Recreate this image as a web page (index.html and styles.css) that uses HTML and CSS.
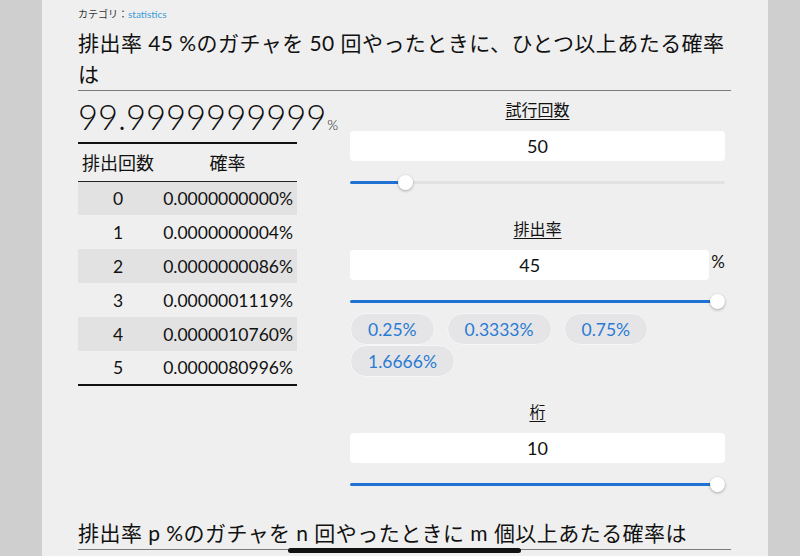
FILE: index.html
```html
<!DOCTYPE html>
<html lang="ja">
<head>
<meta charset="utf-8">
<title>ガチャ確率</title>
<link rel="stylesheet" href="styles.css">
</head>
<body>
<div class="frame">
  <aside class="side side_left"></aside>

  <main class="page">
    <div class="category">カテゴリ：<a href="#">statistics</a></div>
    <h1 class="title">排出率 45 %のガチャを 50 回やったときに、ひとつ以上あたる確率は</h1>

    <div class="calc">
      <section class="result">
        <div class="big_number">99.9999999999<span class="pct">%</span></div>
        <table class="prob_table">
          <thead>
            <tr><th>排出回数</th><th>確率</th></tr>
          </thead>
          <tbody>
            <tr><td>0</td><td>0.0000000000%</td></tr>
            <tr><td>1</td><td>0.0000000004%</td></tr>
            <tr><td>2</td><td>0.0000000086%</td></tr>
            <tr><td>3</td><td>0.0000001119%</td></tr>
            <tr><td>4</td><td>0.0000010760%</td></tr>
            <tr><td>5</td><td>0.0000080996%</td></tr>
          </tbody>
        </table>
      </section>

      <section class="controls">
        <div class="field">
          <label class="field_label">試行回数</label>
          <input class="num" type="text" value="50">
          <input class="slider" type="range" min="1" max="365" value="50" style="--p: 15%">
        </div>

        <div class="field field_rate">
          <label class="field_label">排出率</label>
          <div class="num_row">
            <input class="num" type="text" value="45"><span class="unit">%</span>
          </div>
          <input class="slider" type="range" min="0" max="45" value="45" style="--p: 100%">
          <div class="chips">
            <button class="chip">0.25%</button>
            <button class="chip">0.3333%</button>
            <button class="chip">0.75%</button>
            <button class="chip">1.6666%</button>
          </div>
        </div>

        <div class="field field_last">
          <label class="field_label">桁</label>
          <input class="num" type="text" value="10">
          <input class="slider" type="range" min="0" max="10" value="10" style="--p: 100%">
        </div>
      </section>
    </div>

    <h2 class="title title_sub">排出率 p %のガチャを n 回やったときに m 個以上あたる確率は</h2>
  </main>

  <aside class="side side_right"></aside>
</div>

<div class="home_bar"></div>
</body>
</html>
```

FILE: styles.css
```css
* {
    margin: 0;
    padding: 0;
    box-sizing: border-box;
}

html, body {
    height: 100%;
    overflow: hidden;
}

body {
    font-family: Lato, "Noto Sans CJK JP", sans-serif;
    color: #111;
    background-color: #efefef;
}

.frame {
    display: flex;
    height: 100%;
}

.side {
    background-color: #cfcfcf;
}
.side_left {
    width: 42px;
}
.side_right {
    width: 32px;
}

.page {
    flex: 1;
    background-color: #efefef;
    padding: 8px 37px 0 36px;
}

/* cabecera */
.category {
    font-size: 10px;
    line-height: 12px;
    color: #333;
    font-family: "Noto Sans CJK JP", sans-serif;
}
.category a {
    color: #3d9bd6;
    text-decoration: none;
    font-family: Lato, sans-serif;
}

.title {
    font-size: 21px;
    line-height: 31px;
    font-weight: 400;
    letter-spacing: 0.45px;
    margin-top: 7px;
    padding-bottom: 1px;
    border-bottom: 1px solid #7c7c7c;
}

/* dos columnas */
.calc {
    display: flex;
    gap: 53px;
    margin-top: 6px;
}

.result {
    width: 219px;
}

.big_number {
    height: 40px;
    font-size: 34.5px;
    line-height: 40px;
    font-weight: 300;
    white-space: nowrap;
}
.big_number .pct {
    font-size: 14px;
    line-height: 1;
    margin-left: 1px;
}

.prob_table {
    width: 100%;
    margin-top: 5px;
    border-collapse: collapse;
    border-top: 2px solid #111;
    border-bottom: 2px solid #111;
}
.prob_table th {
    font-family: "Noto Sans CJK JP", sans-serif;
    font-weight: 400;
    font-size: 18px;
    height: 38px;
    border-bottom: 1px solid #222;
}
.prob_table th:first-child {
    width: 80px;
}
.prob_table td {
    font-size: 17.5px;
    height: 34px;
    text-align: right;
    padding-right: 4px;
}
.prob_table td:first-child {
    text-align: center;
    padding-right: 0;
}
.prob_table tbody tr:nth-child(odd) {
    background-color: #e2e2e2;
}

/* controles */
.controls {
    width: 375px;
}

.field {
    display: flex;
    flex-direction: column;
    margin-bottom: 26px;
}
.field_rate {
    margin-bottom: 22px;
}
.field_last {
    margin-bottom: 25px;
}

.field_label {
    align-self: center;
    font-family: "Noto Sans CJK JP", sans-serif;
    font-size: 16px;
    line-height: 24px;
    text-decoration: underline;
    text-underline-offset: 3px;
    margin-bottom: 10px;
}

.num {
    width: 100%;
    height: 30px;
    border: none;
    border-radius: 4px;
    background-color: #fff;
    text-align: center;
    font-family: Lato, sans-serif;
    font-size: 18px;
    color: #111;
    outline: none;
}

.num_row {
    display: flex;
    align-items: flex-start;
}
.num_row .num {
    width: 360px;
}
.unit {
    font-size: 17px;
    line-height: 24px;
    margin-left: 2px;
}

.slider {
    -webkit-appearance: none;
    appearance: none;
    width: 100%;
    height: 16px;
    margin-top: 13px;
    background: transparent;
}
.slider::-webkit-slider-runnable-track {
    height: 3px;
    border-radius: 2px;
    background: linear-gradient(#1f72d3, #1f72d3) 0 0 / var(--p) 100% no-repeat, #e2e2e2;
}
.slider::-webkit-slider-thumb {
    -webkit-appearance: none;
    width: 15px;
    height: 15px;
    margin-top: -6px;
    border-radius: 50%;
    background: #fff;
    box-shadow: 0 1px 3px rgba(0, 0, 0, 0.3);
}

.chips {
    display: flex;
    flex-wrap: wrap;
    column-gap: 12px;
    margin-top: 4px;
}
.chip {
    height: 32px;
    padding: 0 17px;
    border: 1px solid #f6f6f6;
    border-radius: 16px;
    background-color: #e5e5e7;
    color: #2a7bd3;
    font-family: Lato, sans-serif;
    font-size: 17.5px;
}

.title_sub {
    margin-top: 0;
}

.home_bar {
    position: fixed;
    left: 288px;
    top: 548px;
    width: 233px;
    height: 5px;
    border-radius: 3px;
    background-color: #111;
}
```
